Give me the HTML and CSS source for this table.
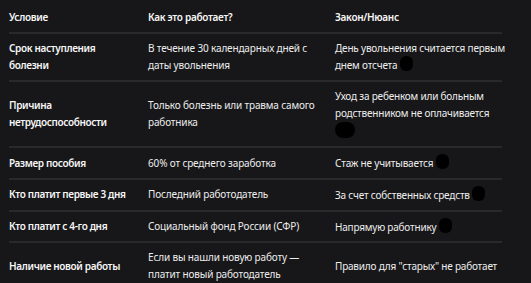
FILE: index.html
```html
<!DOCTYPE html>
<html lang="ru">
<head>
<meta charset="utf-8">
<link rel="stylesheet" href="styles.css">
</head>
<body>
<table class="tbl">
  <thead>
    <tr><th class="c1">Условие</th><th class="c2">Как это работает?</th><th class="c3">Закон/Нюанс</th></tr>
  </thead>
  <tbody>
    <tr><td class="key">Срок наступления болезни</td><td>В течение 30 календарных дней с даты увольнения</td><td class="law"><div class="law-text">День увольнения считается первым днем отсчета <span class="blob"></span></div></td></tr>
    <tr><td class="key">Причина нетрудоспособности</td><td>Только болезнь или травма самого работника</td><td class="law"><div class="law-text">Уход за ребенком или больным родственником не оплачивается <span class="blob wide"></span></div></td></tr>
    <tr><td class="key">Размер пособия</td><td>60% от среднего заработка</td><td class="law"><div class="law-text">Стаж не учитывается <span class="blob"></span></div></td></tr>
    <tr><td class="key">Кто платит первые 3 дня</td><td>Последний работодатель</td><td class="law"><div class="law-text">За счет собственных средств <span class="blob"></span></div></td></tr>
    <tr><td class="key">Кто платит с 4-го дня</td><td>Социальный фонд России (СФР)</td><td class="law"><div class="law-text">Напрямую работнику <span class="blob"></span></div></td></tr>
    <tr><td class="key">Наличие новой работы</td><td>Если вы нашли новую работу — платит новый работодатель</td><td class="law"><div class="law-text">Правило для "старых" не работает</div></td></tr>
  </tbody>
</table>
</body>
</html>
```
FILE: styles.css
```css
html, body {
  margin: 0;
  background: #171719;
}
body {
  padding: 0 9px;
  font-family: "Noto Sans", "Open Sans", sans-serif;
  font-size: 10px;
  letter-spacing: -0.15px;
  line-height: 16.7px;
  color: #ededed;
}
.tbl {
  width: 493px;
  border-collapse: collapse;
  table-layout: fixed;
}
.tbl th {
  text-align: left;
  font-weight: 600;
  color: #f6f6f6;
  padding: 9px 8px 6px 0;
  border-bottom: 2px solid #29292b;
  letter-spacing: -0.3px;
}
.c1 { width: 125px; }
.tbl th.c1 { padding-right: 14px; }
.c2 { width: 179px; }
.tbl th.c3 { padding-right: 0; }
.tbl td {
  padding: 6px 8px 6px 0;
  vertical-align: middle;
  border-bottom: 2px solid #29292b;
}
.tbl td.key { padding-right: 14px; }
.tbl td.law {
  padding-right: 0;
  letter-spacing: -0.2px;
}
.law-text { margin-right: -7px; }
.tbl tr:last-child td { border-bottom: none; }
.key { font-weight: 600; color: #f6f6f6; letter-spacing: -0.35px; }
.blob {
  display: inline-block;
  width: 13px;
  height: 15px;
  background: #000;
  border-radius: 6px;
  vertical-align: -2px;
}
.blob.wide { width: 20px; height: 16px; border-radius: 8px; }
```
